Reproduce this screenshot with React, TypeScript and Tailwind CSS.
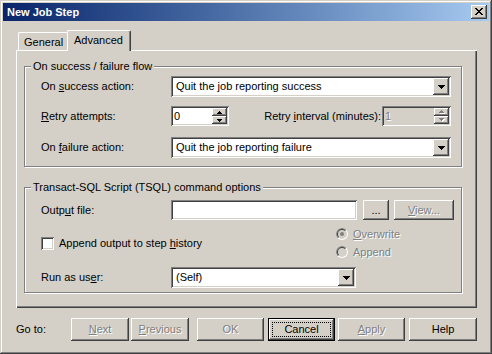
import React from "react";

const RAISED =
  "shadow-[inset_-1px_-1px_#404040,inset_1px_1px_#ffffff,inset_-2px_-2px_#808080,inset_2px_2px_#d4d0c8]";
const SUNKEN =
  "shadow-[inset_1px_1px_#808080,inset_-1px_-1px_#ffffff,inset_2px_2px_#404040,inset_-2px_-2px_#d4d0c8]";
const WINDOW =
  "shadow-[inset_-1px_-1px_#404040,inset_1px_1px_#d4d0c8,inset_-2px_-2px_#808080,inset_2px_2px_#ffffff]";
const DIS = "text-[#808080] [text-shadow:1px_1px_0_#ffffff]";
const ETCH = "border border-[#808080] shadow-[inset_1px_1px_#ffffff,1px_1px_#ffffff]";

function Pix({ rows, color, shadow }: { rows: string[]; color: string; shadow?: string }) {
  const w = rows[0].length;
  const h = rows.length;
  const rects: React.ReactNode[] = [];
  rows.forEach((r, y) =>
    r.split("").forEach((c, x) => {
      if (c === "#") {
        if (shadow) rects.push(<rect key={`s${x}-${y}`} x={x + 1} y={y + 1} width={1} height={1} fill={shadow} />);
      }
    })
  );
  rows.forEach((r, y) =>
    r.split("").forEach((c, x) => {
      if (c === "#") rects.push(<rect key={`${x}-${y}`} x={x} y={y} width={1} height={1} fill={color} />);
    })
  );
  return (
    <svg width={w + (shadow ? 1 : 0)} height={h + (shadow ? 1 : 0)} shapeRendering="crispEdges">
      {rects}
    </svg>
  );
}

const DOWN = ["#######", ".#####.", "..###..", "...#..."];
const SUP = ["..#..", ".###.", "#####"];
const SDOWN = ["#####", ".###.", "..#.."];
const XGLYPH = ["##....##", ".##..##.", "..####..", "...##...", "..####..", ".##..##.", "##....##"];

function CloseBtn() {
  return (
    <div className={`w-[16px] h-[14px] bg-[#d4d0c8] ${RAISED} flex items-center justify-center pb-[1px]`}>
      <Pix rows={XGLYPH} color="#000000" />
    </div>
  );
}

function Combo({ className, value }: { className: string; value: string }) {
  return (
    <div className={`${className} h-[21px] bg-white ${SUNKEN} flex items-center p-[2px]`}>
      <div className="flex-1 pl-[3px] whitespace-nowrap overflow-hidden">{value}</div>
      <div className={`w-[16px] h-[17px] bg-[#d4d0c8] ${RAISED} flex items-center justify-center`}>
        <Pix rows={DOWN} color="#000000" />
      </div>
    </div>
  );
}

function Spin({ className, value, disabled }: { className: string; value: string; disabled?: boolean }) {
  return (
    <div
      className={`${className} h-[20px] ${SUNKEN} ${disabled ? "bg-[#d4d0c8]" : "bg-white"} flex items-stretch p-[2px]`}
    >
      <div className={`flex-1 pl-[1px] flex items-center ${disabled ? DIS : ""}`}>{value}</div>
      <div className="w-[15px] flex flex-col">
        <div className={`h-[8px] bg-[#d4d0c8] ${RAISED} flex items-center justify-center`}>
          {disabled ? <Pix rows={SUP} color="#808080" shadow="#ffffff" /> : <Pix rows={SUP} color="#000000" />}
        </div>
        <div className={`h-[8px] bg-[#d4d0c8] ${RAISED} flex items-center justify-center`}>
          {disabled ? <Pix rows={SDOWN} color="#808080" shadow="#ffffff" /> : <Pix rows={SDOWN} color="#000000" />}
        </div>
      </div>
    </div>
  );
}

function Btn({
  className,
  children,
  disabled,
  isDefault,
}: {
  className: string;
  children: React.ReactNode;
  disabled?: boolean;
  isDefault?: boolean;
}) {
  if (isDefault) {
    return (
      <div className={`${className} relative bg-[#d4d0c8] border border-black ${RAISED} flex items-center justify-center`}>
        <div className="absolute inset-[3px] border border-dotted border-black" />
        <span>{children}</span>
      </div>
    );
  }
  return (
    <div className={`${className} bg-[#d4d0c8] ${RAISED} flex items-center justify-center ${disabled ? DIS : ""}`}>
      <span>{children}</span>
    </div>
  );
}

function Radio({ checked }: { checked?: boolean }) {
  return (
    <svg width="12" height="12" viewBox="0 0 12 12">
      <circle cx="6" cy="6" r="6" fill="#ffffff" />
      <path d="M10.243 1.757 A6 6 0 0 0 1.757 10.243 Z" fill="#808080" />
      <circle cx="6" cy="6" r="5" fill="#d4d0c8" />
      <path d="M9.536 2.464 A5 5 0 0 0 2.464 9.536 Z" fill="#404040" />
      <circle cx="6" cy="6" r="4" fill="#d4d0c8" />
      {checked && <circle cx="6" cy="6" r="2" fill="#808080" />}
    </svg>
  );
}

function Legend({ children }: { children: React.ReactNode }) {
  return <span className="absolute left-[6px] top-[-7px] bg-[#d4d0c8] px-[2px] leading-[13px]">{children}</span>;
}

export default function App() {
  return (
    <div
      className={`w-[492px] h-[354px] bg-[#d4d0c8] ${WINDOW} p-[3px] flex flex-col text-[11px] leading-[13px] text-black [font-family:'Liberation_Sans',Arial,sans-serif] select-none`}
    >
      {/* Title bar */}
      <div className="h-[18px] flex items-center justify-between bg-linear-to-r from-[#0a246a] to-[#a6caf0] pl-[4px] pr-[2px]">
        <span className="text-white font-bold text-[11px]">New Job Step</span>
        <CloseBtn />
      </div>

      {/* Tabs + panel */}
      <div className="pl-[13px] pt-[9px]">
        <div className="h-[20px] flex items-end pl-[2px]">
          <div className="w-[49px] h-[18px] border-t border-l border-white rounded-tl-[2px] pl-[5px] pt-[3px] whitespace-nowrap">
            General
          </div>
          <div className="relative z-10 w-[64px] h-[21px] -mb-[1px] bg-[#d4d0c8] border-t border-l border-white border-r border-r-[#404040] rounded-t-[2px] shadow-[inset_-1px_0_#808080] pl-[6px] pt-[3px]">
            Advanced
          </div>
        </div>

        <div
          className={`w-[461px] h-[258px] bg-[#d4d0c8] shadow-[inset_1px_1px_#ffffff,inset_-1px_-1px_#404040,inset_-2px_-2px_#808080] pl-[8px] pt-[16px]`}
        >
          {/* Group 1 */}
          <div className={`relative w-[438px] h-[101px] ${ETCH} pt-[9px]`}>
            <Legend>On success / failure flow</Legend>
            <div className="w-[426px] h-[21px] flex items-center">
              <div className="w-[146px] pl-[16px]">
                On <u>s</u>uccess action:
              </div>
              <Combo className="w-[280px]" value="Quit the job reporting success" />
            </div>
            <div className="w-[426px] h-[20px] mt-[9px] flex items-center">
              <div className="w-[146px] pl-[16px]">
                <u>R</u>etry attempts:
              </div>
              <Spin className="w-[58px]" value="0" />
              <div className="flex-1 text-right pr-[1px]">
                Retry <u>i</u>nterval (minutes):
              </div>
              <Spin className="w-[69px]" value="1" disabled />
            </div>
            <div className="w-[426px] h-[21px] mt-[11px] flex items-center">
              <div className="w-[146px] pl-[16px]">
                On <u>f</u>ailure action:
              </div>
              <Combo className="w-[280px]" value="Quit the job reporting failure" />
            </div>
          </div>

          {/* Group 2 */}
          <div className={`relative w-[438px] h-[106px] mt-[20px] ${ETCH} pt-[12px]`}>
            <Legend>Transact-SQL Script (TSQL) command options</Legend>
            <div className="h-[20px] flex items-center">
              <div className="w-[146px] pl-[16px]">
                Outp<u>u</u>t file:
              </div>
              <div className={`w-[186px] h-[20px] bg-white ${SUNKEN}`} />
              <Btn className="w-[26px] h-[20px] ml-[6px]">...</Btn>
              <Btn className="w-[60px] h-[20px] ml-[5px]" disabled>
                <u>V</u>iew...
              </Btn>
            </div>
            <div className="h-[30px] mt-[8px] flex">
              <div className="w-[311px] pl-[16px] pt-[9px] flex items-start">
                <div className={`w-[13px] h-[13px] bg-white ${SUNKEN}`} />
                <span className="ml-[5px] leading-[13px]">
                  Append output to step <u>h</u>istory
                </span>
              </div>
              <div className="flex flex-col">
                <div className="h-[12px] flex items-center">
                  <Radio checked />
                  <span className={`ml-[5px] ${DIS}`}>
                    <u>O</u>verwrite
                  </span>
                </div>
                <div className="h-[12px] mt-[6px] flex items-center">
                  <Radio />
                  <span className={`ml-[5px] ${DIS}`}>Append</span>
                </div>
              </div>
            </div>
            <div className="h-[21px] mt-[9px] flex items-center">
              <div className="w-[146px] pl-[16px]">
                Run as us<u>e</u>r:
              </div>
              <Combo className="w-[185px]" value="(Self)" />
            </div>
          </div>
        </div>
      </div>

      {/* Bottom buttons */}
      <div className="mt-[10px] h-[23px] flex items-center pl-[13px]">
        <div className="w-[55px]">Go to:</div>
        <Btn className="w-[58px] h-[23px]" disabled>
          <u>N</u>ext
        </Btn>
        <Btn className="w-[58px] h-[23px] ml-[2px]" disabled>
          <u>P</u>revious
        </Btn>
        <Btn className="w-[67px] h-[23px] ml-[8px]" disabled>
          OK
        </Btn>
        <Btn className="w-[67px] h-[23px] ml-[4px]" isDefault>
          Cancel
        </Btn>
        <Btn className="w-[67px] h-[23px] ml-[3px]" disabled>
          <u>A</u>pply
        </Btn>
        <Btn className="w-[68px] h-[23px] ml-[4px]">Help</Btn>
      </div>
    </div>
  );
}
